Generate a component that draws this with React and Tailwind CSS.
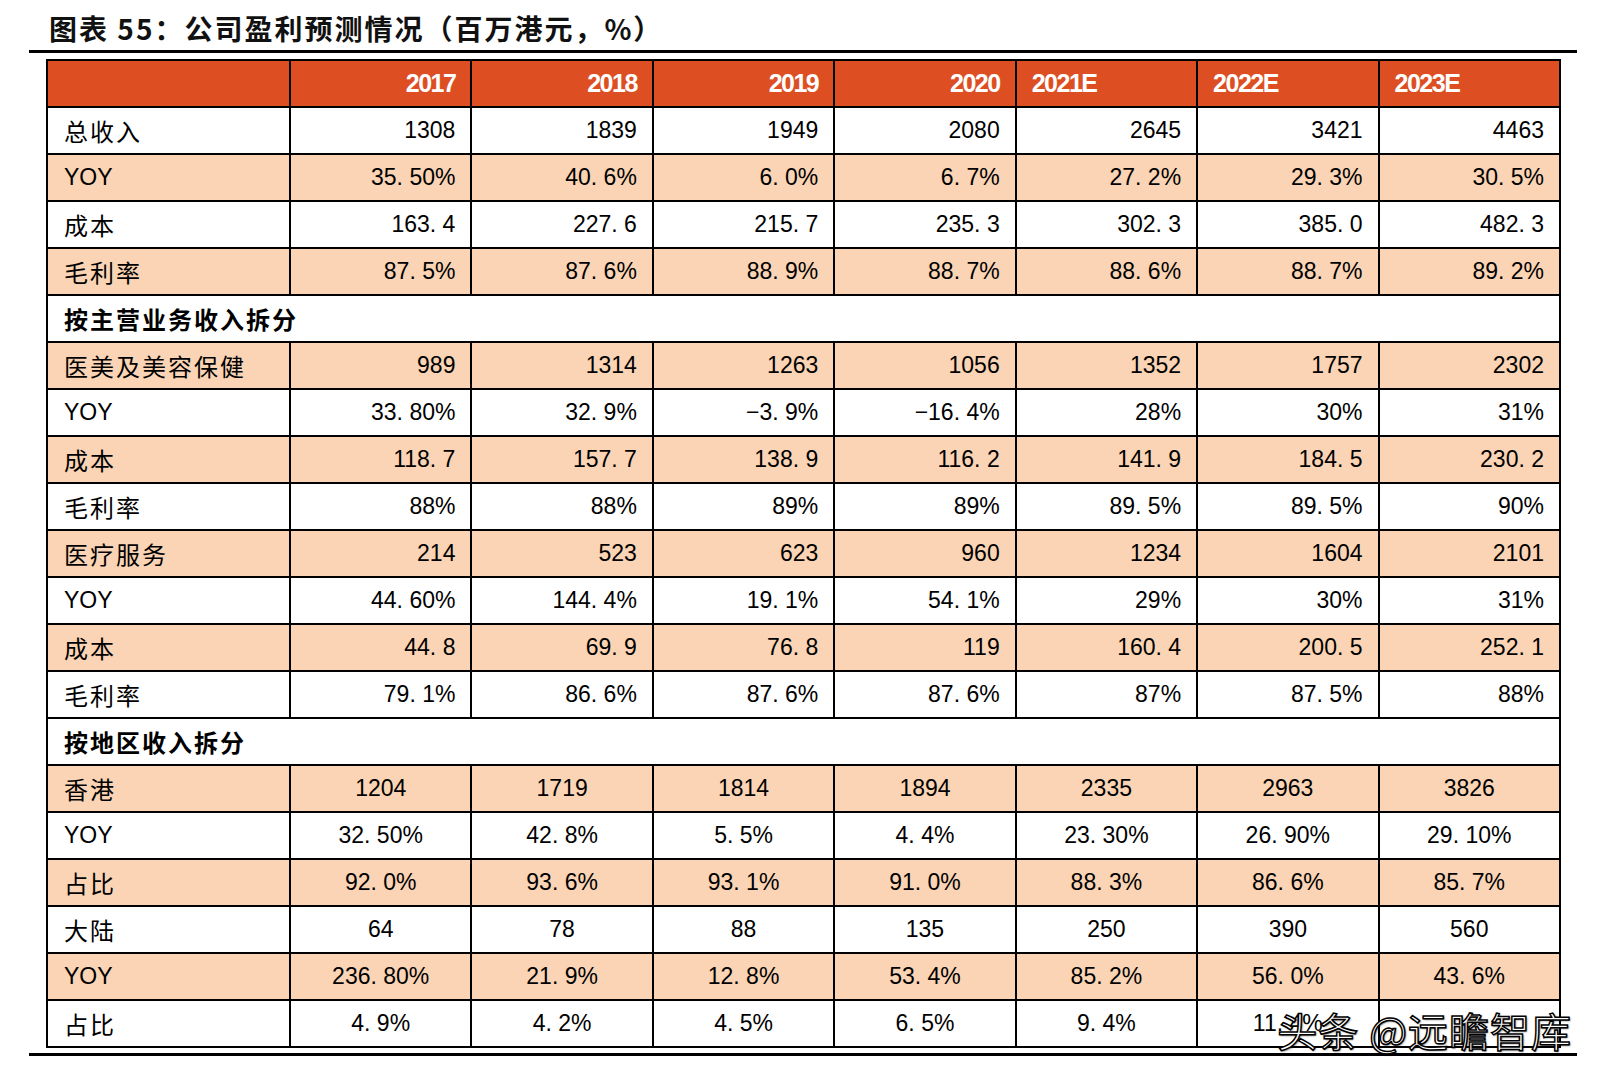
import React from "react";

const years = ["2017", "2018", "2019", "2020", "2021E", "2022E", "2023E"];

// align: r (right) | c (center); peach row fill
const rows = [
  { label: "总收入", vals: ["1308", "1839", "1949", "2080", "2645", "3421", "4463"], align: "r", peach: false },
  { label: "YOY", vals: ["35. 50%", "40. 6%", "6. 0%", "6. 7%", "27. 2%", "29. 3%", "30. 5%"], align: "r", peach: true },
  { label: "成本", vals: ["163. 4", "227. 6", "215. 7", "235. 3", "302. 3", "385. 0", "482. 3"], align: "r", peach: false },
  { label: "毛利率", vals: ["87. 5%", "87. 6%", "88. 9%", "88. 7%", "88. 6%", "88. 7%", "89. 2%"], align: "r", peach: true },
  { section: "按主营业务收入拆分" },
  { label: "医美及美容保健", vals: ["989", "1314", "1263", "1056", "1352", "1757", "2302"], align: "r", peach: true },
  { label: "YOY", vals: ["33. 80%", "32. 9%", "−3. 9%", "−16. 4%", "28%", "30%", "31%"], align: "r", peach: false },
  { label: "成本", vals: ["118. 7", "157. 7", "138. 9", "116. 2", "141. 9", "184. 5", "230. 2"], align: "r", peach: true },
  { label: "毛利率", vals: ["88%", "88%", "89%", "89%", "89. 5%", "89. 5%", "90%"], align: "r", peach: false },
  { label: "医疗服务", vals: ["214", "523", "623", "960", "1234", "1604", "2101"], align: "r", peach: true },
  { label: "YOY", vals: ["44. 60%", "144. 4%", "19. 1%", "54. 1%", "29%", "30%", "31%"], align: "r", peach: false },
  { label: "成本", vals: ["44. 8", "69. 9", "76. 8", "119", "160. 4", "200. 5", "252. 1"], align: "r", peach: true },
  { label: "毛利率", vals: ["79. 1%", "86. 6%", "87. 6%", "87. 6%", "87%", "87. 5%", "88%"], align: "r", peach: false },
  { section: "按地区收入拆分" },
  { label: "香港", vals: ["1204", "1719", "1814", "1894", "2335", "2963", "3826"], align: "c", peach: true },
  { label: "YOY", vals: ["32. 50%", "42. 8%", "5. 5%", "4. 4%", "23. 30%", "26. 90%", "29. 10%"], align: "c", peach: false },
  { label: "占比", vals: ["92. 0%", "93. 6%", "93. 1%", "91. 0%", "88. 3%", "86. 6%", "85. 7%"], align: "c", peach: true },
  { label: "大陆", vals: ["64", "78", "88", "135", "250", "390", "560"], align: "c", peach: false },
  { label: "YOY", vals: ["236. 80%", "21. 9%", "12. 8%", "53. 4%", "85. 2%", "56. 0%", "43. 6%"], align: "c", peach: true },
  { label: "占比", vals: ["4. 9%", "4. 2%", "4. 5%", "6. 5%", "9. 4%", "11. 4%", ""], align: "c", peach: false },
];

const cjk = "font-['Noto_Sans_CJK_SC',sans-serif]";
const num = "font-['Liberation_Sans_Narrow','Liberation_Sans',sans-serif]";

export default function App() {
  return (
    <div className="bg-white w-[1600px] h-[1082px] pt-[10px] pl-[29px]">
      <div className="w-[1548px]">
        <h1 className={`pl-[20px] h-[40px] text-[28px] font-bold tracking-[2px] text-[#111] leading-[36px] ${cjk}`}>
          图表 55：公司盈利预测情况（百万港元，%）
        </h1>
        <div className="border-t-[3px] border-black" />
        <div className="relative px-[17px] pt-[6px]">
          <table className="w-[1515px] table-fixed border-collapse">
            <colgroup>
              <col className="w-[243px]" />
              {years.map((y) => (
                <col key={y} />
              ))}
            </colgroup>
            <thead>
              <tr className="h-[47px] bg-[#dd4f22]">
                <th className="border-2 border-black" />
                {years.map((y, i) => (
                  <th
                    key={y}
                    className={`border-2 border-black px-[15px] text-white text-[25px] font-bold tracking-[-1.5px] ${num} ${
                      i < 4 ? "text-right" : "text-left"
                    }`}
                  >
                    {y}
                  </th>
                ))}
              </tr>
            </thead>
            <tbody>
              {rows.map((row, idx) =>
                row.section ? (
                  <tr key={idx} className="h-[47px] bg-white">
                    <td
                      colSpan={8}
                      className={`border-2 border-black pl-[16px] text-[24px] tracking-[2px] font-bold text-black ${cjk}`}
                    >
                      {row.section}
                    </td>
                  </tr>
                ) : (
                  <tr key={idx} className={`h-[47px] ${row.peach ? "bg-[#fad4b4]" : "bg-white"}`}>
                    <td
                      className={`border-2 border-black pl-[16px] text-black ${
                        row.label === "YOY" ? `${num} text-[23px]` : `${cjk} text-[24px] tracking-[2px]`
                      }`}
                    >
                      {row.label}
                    </td>
                    {row.vals.map((v, i) => (
                      <td
                        key={i}
                        className={`border-2 border-black px-[15px] text-[23px] text-black ${num} ${
                          row.align === "r" ? "text-right" : "text-center"
                        }`}
                      >
                        {v}
                      </td>
                    ))}
                  </tr>
                )
              )}
            </tbody>
          </table>
          <div
            className={`absolute right-[5px] bottom-[-2px] text-[40px] leading-none text-white tracking-[1px] [-webkit-text-stroke:1.5px_#000] [text-shadow:1px_1px_2px_rgba(0,0,0,0.6)] ${cjk}`}
          >
            头条 @远瞻智库
          </div>
        </div>
        <div className="mt-[5px] border-t-[3px] border-black" />
      </div>
    </div>
  );
}
